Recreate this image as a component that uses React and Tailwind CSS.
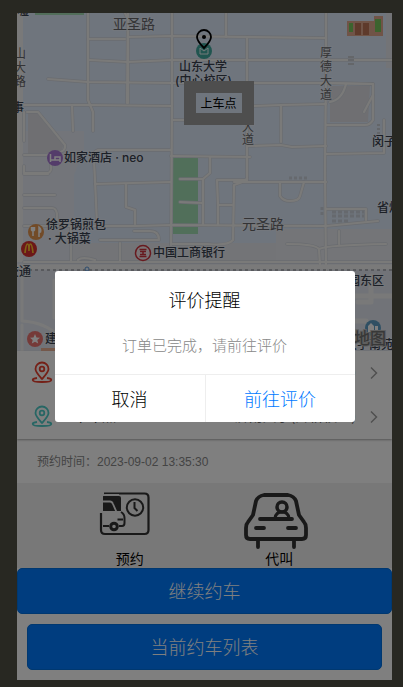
import React from "react";

const roads = [
  "M88 13V100L93 112V131",
  "M88 39H125M128 13L127 103",
  "M125 13L128 20V103",
  "M128 37L172 36L325 38",
  "M90 60L128 62L172 60H392",
  "M48 79L88 82L172 83L325 83L373 84",
  "M24 105L88 105L172 106",
  "M72 105L73 131",
  "M172 13V106L171 245",
  "M226 13V37M247 37L247 105L247 180",
  "M326 13V70L325 170L326 272",
  "M172 120H247M254 106L281 105L326 104",
  "M281 105V142M247 146L281 145L292 147L326 146",
  "M24 112V141M27 112H38L65 145Q66 152 56 153L46 155H24",
  "M171 150H98Q92 152 94 160L95 180L97 224",
  "M24 166V173H48Q52 172 51 164",
  "M24 174H48M24 208H52Q56 208 57 214V224",
  "M24 195H55M24 226L70 226",
  "M95 184L171 182M126 184V207L135 210V224",
  "M57 226H136L172 225L326 226L378 221",
  "M134 231H150Q159 231 159 240H100",
  "M171 156L250 157M210 157V173L203 179H180",
  "M180 202L202 203M203 179V225",
  "M218 225V205L217 180H247V178Q247 181 234 185L233 240Q228 246 208 244H171",
  "M218 205H232",
  "M234 182H250L326 182",
  "M280 182V196Q283 201 290 201Q299 201 300 196L304 182",
  "M326 83L373 84V120Q370 125 365 125H326",
  "M346 84Q342 100 330 102M373 95L364 112",
  "M384 120V153L326 154",
  "M326 209H366V220",
  "M287 244Q315 244 319 249Q327 245 386 244M319 249L320 265M339 231V244",
  "M24 262H392M71 226V262M120 243V262M78 260Q82 256 95 260",
];

function Pin({ color }) {
  return (
    <svg className="size-6 shrink-0" viewBox="0 0 24 24" fill="none" stroke={color} strokeWidth="1.800">
      <path d="M12 18C8 13.500 5.500 11 5.500 8a6.500 6.500 0 0 1 13 0C18.500 11 16 13.500 12 18Z" />
      <circle cx="12" cy="8" r="2.300" />
      <path d="M7 17c-3 .4-4.300 1-4.300 1.900 0 1.400 4 2.100 9.300 2.100s9.300-.7 9.300-2.100c0-.9-1.300-1.500-4.300-1.900" />
    </svg>
  );
}

function Label({ x, y, size = 12, road, children }) {
  return (
    <text
      x={x}
      y={y}
      fontSize={size}
      fontWeight={road ? 400 : 500}
      fill={road ? "#66676a" : "#38414f"}
      stroke="#f2f5f9"
      strokeWidth="2"
      strokeOpacity="0.4"
      paintOrder="stroke"
    >
      {children}
    </text>
  );
}

function CityMap() {
  return (
    <svg
      className="block h-full w-full font-['Inter','Noto_Sans_CJK_SC',sans-serif]"
      viewBox="17 13 375 338"
      preserveAspectRatio="xMidYMid slice"
      role="img"
      aria-label="地图"
    >
      <rect x="17" y="13" width="375" height="338" fill="#dfebfb" />
      <path d="M17 131H84V150L74 175V262H17Z" fill="#e6eaf4" />
      <path d="M17 13H23V351H17Z" fill="#f2f2f2" />
      <path d="M276 229H392V351H276Z" fill="#e8eaf0" />
      <path d="M386 13H392V68H386ZM120 243H276V262H70V243Z" fill="#e6e8ee" />
      <path d="M17 262H392V351H17Z" fill="#e2e7f0" />
      <path d="M28 112H38L64 145L60 152L28 154Z" fill="#dedfe4" />
      <path d="M330 86H370L368 122H330Z" fill="#dedfe4" />
      <path d="M35 13H84V15H35Z" fill="#a5dcb4" />
      <path d="M173 158H198V234H173Z" fill="#a3dfb5" />
      <g fill="none" strokeLinecap="round" strokeLinejoin="round">
        <g stroke="#d3d8e0" strokeWidth="3.500">{roads.map((d) => <path key={d} d={d} />)}</g>
        <g stroke="#f5f4f2" strokeWidth="2.200">{roads.map((d) => <path key={d} d={d} />)}</g>
        <path d="M17 267H392" stroke="#f5f5f5" strokeWidth="5" />
        <path d="M22 272V321Q45 322 60 337M22 325V351M54 280V318" stroke="#f3f3f2" strokeWidth="3" />
        <path d="M350 296H392M371 276V302H358M350 321H366" stroke="#f3f3f2" strokeWidth="5" />
        <path d="M17 270H392" stroke="#a0a3a8" strokeWidth="1.500" strokeDasharray="3 3" strokeLinecap="butt" />
        <path d="M289 178H308M322 207V215" stroke="#ccd3dc" strokeWidth="3" strokeDasharray="3 2" strokeLinecap="butt" />
        <path d="M332 212H364M332 216H364M332 221H350" stroke="#ccd3dc" strokeWidth="3" strokeDasharray="4 2" strokeLinecap="butt" />
        <path d="M348 57H354M348 60H354M348 64H354M377 125H380M377 129H380M377 133H380" stroke="#c8ccd3" strokeWidth="2" strokeLinecap="butt" />
      </g>
      <path d="M347 21H374V16H383V36H347Z" fill="#e0a98f" />
      <path d="M349 23H353V32H349ZM375 19H381V32H375Z" fill="#78c75c" />
      <path d="M355 23H361V35H355ZM363 23H369V35H363Z" fill="#bd7557" />
      <circle cx="87" cy="269" r="2" fill="#e8f3ff" stroke="#5c98d8" />
      <path d="M41 348H60V351H41Z" fill="#edb295" />

      <Label x="17" y="15">墟</Label>
      <Label x="113" y="29" size={14} road>亚圣路</Label>
      <Label x="14" y="58" road>山</Label>
      <Label x="14" y="72" road>大</Label>
      <Label x="14" y="86" road>路</Label>
      <Label x="12" y="112">事</Label>
      <Label x="320" y="57" road>厚</Label>
      <Label x="320" y="71" road>德</Label>
      <Label x="320" y="85" road>大</Label>
      <Label x="320" y="99" road>道</Label>
      <Label x="242" y="131" road>大</Label>
      <Label x="242" y="144" road>道</Label>
      <Label x="372" y="146">闵子</Label>
      <Label x="377" y="212">省煤</Label>
      <Label x="179" y="71">山东大学</Label>
      <Label x="175" y="85">(中心校区)</Label>
      <Label x="64" y="162">如家酒店 · neo</Label>
      <Label x="46" y="229">徐罗锅煎包</Label>
      <Label x="48" y="243">· 大锅菜</Label>
      <Label x="242" y="229" size={14} road>元圣路</Label>
      <Label x="153" y="257">中国工商银行</Label>
      <Label x="7" y="276">交通</Label>
      <Label x="45" y="343">建设银行</Label>
      <Label x="348" y="285">园东区</Label>
      <Label x="345" y="349">大学南苑</Label>

      <circle cx="204" cy="51" r="8" fill="#42aaa0" />
      <path d="M200 48L204 51L208 48V54H200Z" fill="none" stroke="#e9f5f4" />
      <circle cx="55" cy="158" r="8" fill="#a879d4" />
      <path d="M50.500 154V162M50.500 160H60V162M60 160V157H55V160" fill="none" stroke="#fff" strokeWidth="1.500" />
      <circle cx="36" cy="232" r="8" fill="#e59650" />
      <path d="M33 227V236M31.500 227V230Q33 232 34.500 230V227M39 237V227Q41.500 229 40.500 232H39" fill="none" stroke="#fff" strokeWidth="1.500" />
      <circle cx="29" cy="249" r="8" fill="#d83030" />
      <path d="M25 253Q26 244 27.500 244Q29 244 29 251Q29 244 30.500 244Q32 244 33 253" fill="none" stroke="#ffc52e" strokeWidth="1.700" />
      <circle cx="143" cy="253" r="7.500" fill="#f5e9ec" stroke="#cf353f" strokeWidth="1.500" />
      <path d="M139.500 249.500H146.500M139.500 256.500H146.500M143 251.500V254.500M140 251.500H146M140 254.500H146" stroke="#cf353f" strokeWidth="1.500" />
      <circle cx="35" cy="339" r="8" fill="#eb7571" />
      <path d="M35 334L36.500 337.400L40 337.700L37.300 340L38.200 343.600L35 341.700L31.800 343.600L32.700 340L30 337.700L33.500 337.400Z" fill="#fff" />
      <circle cx="373" cy="328" r="8" fill="#5e9fc6" />
      <path d="M368 332V326L371 323L374 326V332ZM375 326H378V332H375Z" fill="#fff" />
      <text x="354" y="344" fontSize="16" fontWeight="500" fill="#707070" stroke="#bdbdbd" strokeWidth="2" paintOrder="stroke">地图</text>
      <path d="M204 48Q197 41 197 37A7 7 0 0 1 211 37Q211 41 204 48Z" fill="none" stroke="#000" strokeWidth="1.800" />
      <circle cx="204" cy="37" r="2" />
    </svg>
  );
}

function TripRow({ color, label, place }) {
  return (
    <button type="button" className="flex h-11 w-full items-center pr-3 pl-[13px] text-sm text-[#333]">
      <Pin color={color} />
      <span className="ml-5 pb-1">{label}</span>
      <span className="ml-auto pb-1 text-[#666]">{place}</span>
      <svg className="ml-3 size-3" viewBox="0 0 12 12" fill="none" stroke="#a0a0a0" strokeWidth="1.500">
        <path d="M3 0.500L8.500 6L3 11.500" />
      </svg>
    </button>
  );
}

function BookingIcon() {
  return (
    <svg className="h-[58px] w-16" viewBox="98 490 64 58" fill="none" stroke="#333" strokeWidth="2.200">
      <path d="M104 492.500H144.500Q148.500 492.500 148.500 496.500V529Q148.500 533 144.500 533H105Q101 533 101 529V512" />
      <path d="M103 495H119Q121 495 121 497V510H103Z" fill="#333" stroke="none" />
      <path d="M102 511V497Q102 493.500 106 493.500H119" stroke="#f0f0f0" strokeWidth="1.200" />
      <path d="M103 500.500H110Q112 500.500 113 503L116.500 511" stroke="#f0f0f0" strokeWidth="1.800" />
      <path d="M121 511Q124.500 513 124.500 517V522Q124.500 525 122 525H119M109 525H103M117.500 518.500H123" strokeWidth="2" />
      <circle cx="114" cy="525.500" r="3.300" strokeWidth="3" />
      <circle cx="135" cy="506.500" r="8.200" strokeWidth="2" />
      <path d="M134.500 501V507L137.500 510" strokeWidth="2" />
    </svg>
  );
}

function ProxyIcon() {
  return (
    <svg className="h-[58px] w-16 overflow-visible" viewBox="247 490 64 58" fill="none" stroke="#333" strokeWidth="3.800" strokeLinecap="round" strokeLinejoin="round">
      <path d="M264 494H288Q294 495 296 500L299 514L304 521Q306 523 306 527V534Q306 538 302 538H250Q246 538 246 534V527Q246 523 248 521L253 514L256 500Q258 495 264 494Z" />
      <path d="M260 518H292M256 527H264M288 527H296M258 540V546M294 540V546" />
      <circle cx="282" cy="506" r="5" strokeWidth="3.500" />
      <path d="M275 517Q276 511 282 511Q288 511 289 517" strokeWidth="3" />
    </svg>
  );
}

export default function App() {
  return (
    <div className="min-h-screen bg-[#282822] pt-[13px] pr-[11px] pb-[7px] pl-[17px] font-['Noto_Sans_CJK_SC',sans-serif]">
      <div className="relative overflow-hidden bg-white">
        <main>
          <section className="relative h-[338px] overflow-hidden">
            <CityMap />
            <div className="absolute top-[68px] left-1/2 -ml-[21px] border-12 border-[#9c9c9c] px-[5px] text-xs leading-5 whitespace-nowrap text-black">
              上车点
            </div>
          </section>
          <section className="relative shadow-[0_1px_2px_#aaaaaa]">
            <TripRow color="#e8402f" label="上车点" place="山东大学(中心校区)" />
            <TripRow color="#4ecdc9" label="下车点" place="济南大学(舜耕校区)" />
          </section>
          <p className="h-11 px-5 font-['Liberation_Sans','Noto_Sans_CJK_SC',sans-serif] text-xs leading-[46px] text-[#888]">
            预约时间：2023-09-02 13:35:30
          </p>
          <section className="grid grid-cols-2 bg-[#f0f0f0] px-[38px] pt-2">
            <button type="button" className="flex flex-col items-center text-sm leading-[19px] text-black">
              <BookingIcon />
              预约
            </button>
            <button type="button" className="flex flex-col items-center text-sm leading-[19px] text-black">
              <ProxyIcon />
              代叫
            </button>
          </section>
          <button type="button" className="block h-[46px] w-full rounded-[5px] border border-[#0070e0] bg-[#007aff] pb-0.5 text-lg font-light text-white">
            继续约车
          </button>
          <div className="p-2.5">
            <button type="button" className="block h-[46px] w-full rounded-[5px] border border-[#0070e0] bg-[#007aff] pb-0.5 text-lg font-light text-white">
              当前约车列表
            </button>
          </div>
        </main>
        <div className="absolute inset-0 flex items-center justify-center bg-black/50">
          <div role="dialog" aria-modal="true" aria-labelledby="dialog-title" className="w-4/5 overflow-hidden rounded-[3px] bg-white text-center font-light">
            <h2 id="dialog-title" className="pt-[15px] text-lg leading-[26px] font-light text-black">评价提醒</h2>
            <p className="pt-[22px] pb-[18px] text-[15px] leading-[22px] text-[#888]">订单已完成，请前往评价</p>
            <div className="grid grid-cols-2 border-t border-[#eee] text-lg leading-[47px]">
              <button type="button" className="text-black">取消</button>
              <button type="button" className="border-l border-[#eee] text-[#007aff]">前往评价</button>
            </div>
          </div>
        </div>
      </div>
    </div>
  );
}
